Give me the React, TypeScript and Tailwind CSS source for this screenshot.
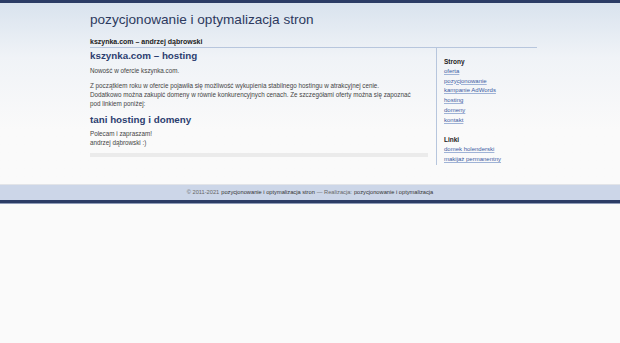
import React from "react";

const links1 = ["oferta", "pozycjonowanie", "kampanie AdWords", "hosting", "domeny", "kontakt"];
const links2 = ["domek holenderski", "makijaż permanentny"];

export default function App() {
  return (
    <div className="min-h-[343px] bg-[#fafafa] font-['Liberation_Sans',Arial,sans-serif]">
      <div className="h-[3px] bg-[#2b3c65]" />
      <div className="bg-gradient-to-b from-[#d9e3ee] via-[#f0f3f7] via-30% to-[#fafafa] to-70% pb-[19px]">
        <div className="ml-[90px] w-[447px]">
          <h1 className="pt-[8px] text-[13.6px] leading-[17px] text-[#2d3a5e] whitespace-nowrap">
            pozycjonowanie i optymalizacja stron
          </h1>
          <div className="mt-[9px] border-b border-[#b7c6dd] pb-[1px] text-[7px] font-bold leading-[9px] text-[#222]">
            kszynka.com – andrzej dąbrowski
          </div>
          <div className="flex">
            <div className="w-[338px] pt-[1px]">
              <h2 className="text-[9.8px] font-bold leading-[14px] text-[#2c3e70]">kszynka.com – hosting</h2>
              <p className="mt-[3px] text-[6.3px] leading-[9px] text-[#444]">Nowość w ofercie kszynka.com.</p>
              <p className="mt-[6px] text-[6.3px] leading-[9px] text-[#444] whitespace-nowrap">
                Z początkiem roku w ofercie pojawiła się możliwość wykupienia stabilnego hostingu w atrakcyjnej cenie.
                <br />
                Dodatkowo można zakupić domeny w równie konkurencyjnych cenach. Ze szczegółami oferty można się zapoznać
                <br />
                pod linkiem poniżej:
              </p>
              <h3 className="mt-[5px] text-[9.8px] font-bold leading-[14px] text-[#2c3e70]">tani hosting i domeny</h3>
              <p className="mt-[2px] text-[6.3px] leading-[9px] text-[#444]">
                Polecam i zapraszam!
                <br />
                andrzej dąbrowski :)
              </p>
              <div className="mt-[6px] h-[4px] bg-[#ebebeb]" />
            </div>
            <div className="ml-[8px] flex-1 border-l border-[#b7c6dd] pl-[7px] pt-[9px]">
              <div className="text-[6.5px] font-bold leading-[9px] text-[#222]">Strony</div>
              <ul className="mt-[1px]">
                {links1.map((l) => (
                  <li key={l} className="text-[6px] leading-[9.7px] text-[#3b5ba3] underline decoration-[#9fb3d6]">
                    {l}
                  </li>
                ))}
              </ul>
              <div className="mt-[10px] text-[6.5px] font-bold leading-[9px] text-[#222]">Linki</div>
              <ul className="mt-[1px]">
                {links2.map((l) => (
                  <li key={l} className="text-[6px] leading-[9.7px] text-[#3b5ba3] underline decoration-[#9fb3d6]">
                    {l}
                  </li>
                ))}
              </ul>
            </div>
          </div>
        </div>
      </div>
      <div className="border-t border-[#e2e4e8] bg-[#ccd6e8] h-[16px] flex items-center justify-center text-[5.7px] text-[#666] whitespace-nowrap">
        © 2011-2021 <span className="ml-[2px] text-[#333]">pozycjonowanie i optymalizacja stron</span>
        <span className="ml-[2px]">— Realizacja:</span>
        <span className="ml-[2px] text-[#333]">pozycjonowanie i optymalizacja</span>
      </div>
      <div className="h-[3px] bg-[#2b3c65]" />
      <div className="h-[1px] bg-[#8e9bb8]" />
    </div>
  );
}
